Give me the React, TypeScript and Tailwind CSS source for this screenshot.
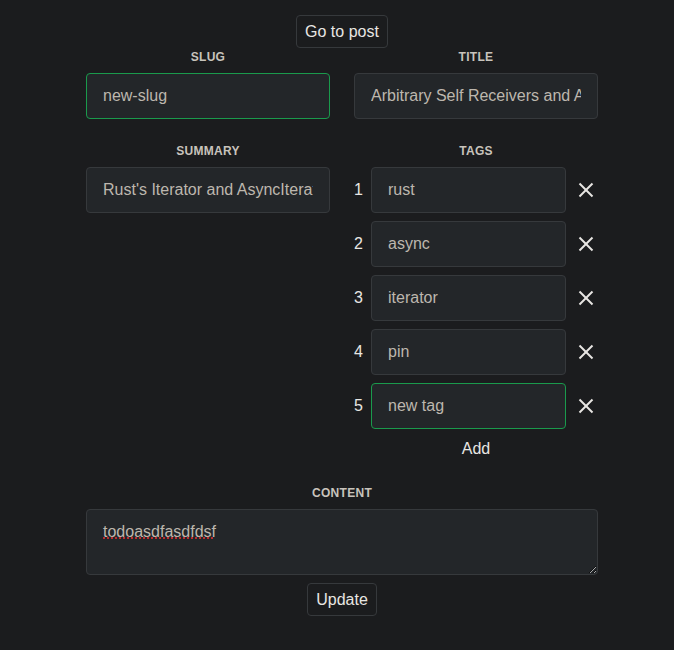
import React from "react";

const inputCls =
  "w-full h-[46px] rounded-[4px] border bg-[#232629] px-4 text-[16px] text-[#bdb7ae] outline-none";

function XIcon() {
  return (
    <svg width="16" height="16" viewBox="0 0 16 16" fill="none" stroke="#e8e6e3" strokeWidth="2" strokeLinecap="butt">
      <line x1="1.5" y1="1.5" x2="14.5" y2="14.5" />
      <line x1="14.5" y1="1.5" x2="1.5" y2="14.5" />
    </svg>
  );
}

function Label({ children }: { children: React.ReactNode }) {
  return (
    <div className="h-[16px] leading-[16px] text-center text-[12px] font-bold tracking-[0.3px] text-[#c8c3bc] mb-[8px]">
      {children}
    </div>
  );
}

export default function App() {
  const tags = ["rust", "async", "iterator", "pin", "new tag"];
  return (
    <div
      className="min-h-screen bg-[#1b1c1e] pt-[15px] pl-[10px] flex flex-col items-center"
      style={{ fontFamily: '"Liberation Sans", Arial, sans-serif' }}
    >
      <button className="h-[33px] px-[8px] rounded-[4px] border border-[#36393c] bg-[#1b1c1e] text-[16px] text-[#e8e6e3]">
        Go to post
      </button>
      <div className="w-[512px] grid grid-cols-2 gap-x-6 mt-[1px]">
        <div>
          <Label>SLUG</Label>
          <input className={inputCls + " border-[#1a9a4c]"} defaultValue="new-slug" readOnly />
        </div>
        <div>
          <Label>TITLE</Label>
          <input
            className={inputCls + " border-[#36393c]"}
            defaultValue="Arbitrary Self Receivers and Async Iterators"
            readOnly
          />
        </div>
        <div className="mt-[24px]">
          <Label>SUMMARY</Label>
          <input
            className={inputCls + " border-[#36393c]"}
            defaultValue="Rust's Iterator and AsyncIterator traits"
            readOnly
          />
        </div>
        <div className="mt-[24px]">
          <Label>TAGS</Label>
          <div className="flex flex-col gap-[8px]">
            {tags.map((t, i) => (
              <div key={t} className="flex items-center">
                <div className="w-[17px] pr-[8px] text-center text-[16px] text-[#e8e6e3]">{i + 1}</div>
                <div className="w-[195px]">
                  <input
                    className={
                      inputCls + (i === tags.length - 1 ? " border-[#1a9a4c]" : " border-[#36393c]")
                    }
                    defaultValue={t}
                    readOnly
                  />
                </div>
                <div className="flex-1 flex justify-center pl-[8px]">
                  <XIcon />
                </div>
              </div>
            ))}
          </div>
          <div className="mt-[12px] h-[16px] leading-[16px] text-center text-[16px] text-[#e8e6e3]">Add</div>
        </div>
        <div className="col-span-2 mt-[28px]">
          <Label>CONTENT</Label>
          <textarea
            className="block w-full h-[66px] rounded-[4px] border border-[#36393c] bg-[#232629] px-4 pt-[13px] text-[16px] leading-[18px] text-[#bdb7ae] outline-none underline decoration-dotted decoration-[#e03030]"
            defaultValue="todoasdfasdfdsf"
            spellCheck={false}
          />
        </div>
      </div>
      <button className="mt-[8px] h-[33px] px-[8px] rounded-[4px] border border-[#36393c] bg-[#1b1c1e] text-[16px] text-[#e8e6e3]">
        Update
      </button>
    </div>
  );
}
